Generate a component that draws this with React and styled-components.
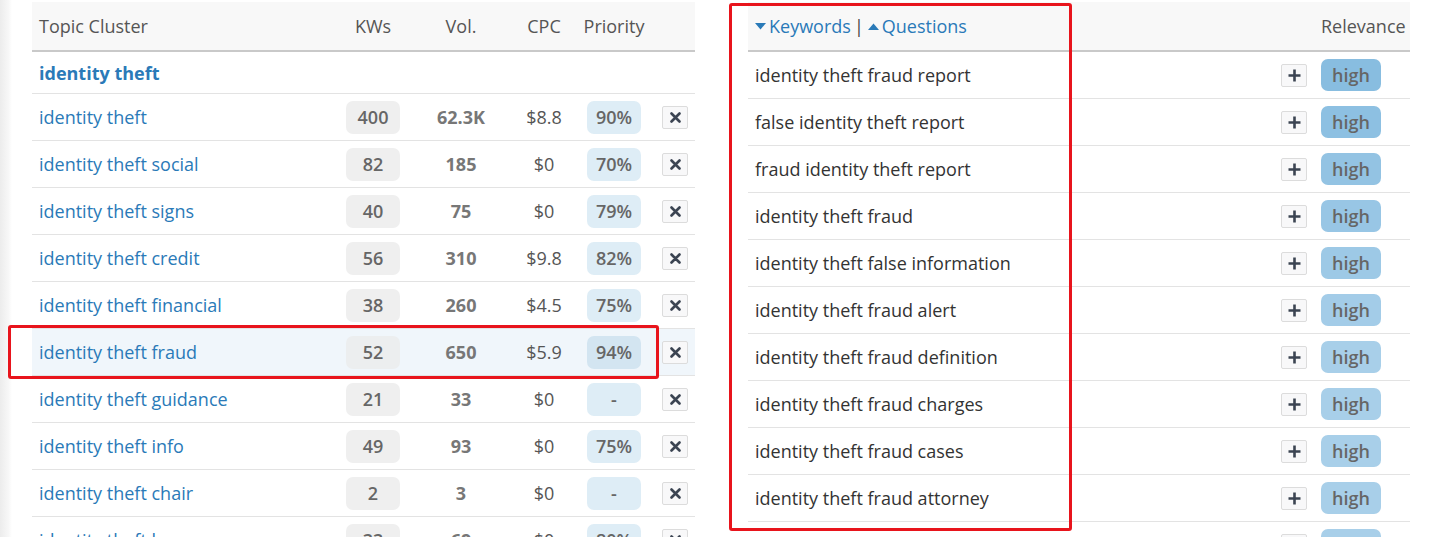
import React from "react";
import styled, { createGlobalStyle } from "styled-components";

const GlobalStyle = createGlobalStyle`
  html, body {
    margin: 0;
    padding: 0;
    background: #fff;
    overflow: hidden;
  }
  body {
    font-family: "Open Sans", "Liberation Sans", sans-serif;
    font-size: 18px;
    color: #333;
  }
`;

const Colors = {
  Link: "#2a7ab8",
  Header: "#555",
  HeaderBg: "#f8f8f8",
  Line: "#e3e3e3",
  HeaderLine: "#c9c9c9",
  Red: "#e8141c",
};

const Page = styled.div`
  position: relative;
  display: flex;
  height: 537px;
  overflow: hidden;
`;

// the faint grey strip down the left edge of the page
const EdgeStrip = styled.div`
  width: 12px;
  flex: none;
  background: linear-gradient(to right, #ececec, #f7f7f7 70%, #fff);
`;

const Content = styled.div`
  display: flex;
  align-items: flex-start;
  gap: 53px;
  padding: 2px 0 0 20px;
`;

const Table = styled.div`
  width: ${props => props.width}px;
  flex: none;
  display: flex;
  flex-direction: column;
`;

const clusterCols = "307px 68px 108px 58px 82px 40px";
const keywordCols = "1fr 40px 96px";

const HeaderRow = styled.div`
  display: grid;
  grid-template-columns: ${props => props.cols};
  align-items: center;
  height: 48px;
  flex: none;
  background: ${Colors.HeaderBg};
  border-bottom: 2px solid ${Colors.HeaderLine};
  color: ${Colors.Header};
`;

const HeadCell = styled.div`
  padding: 0 7px;
  text-align: ${props => props.align || "left"};
  white-space: nowrap;
`;

const Row = styled.div`
  display: grid;
  grid-template-columns: ${props => props.cols};
  align-items: center;
  height: ${props => props.height || 46}px;
  flex: none;
  border-bottom: 1px solid ${Colors.Line};
  background: ${props => (props.active ? "#f0f6fb" : "transparent")};
`;

const Cell = styled.div`
  padding: 0 7px;
  display: flex;
  justify-content: ${props => props.justify || "flex-start"};
  white-space: nowrap;
`;

const TopicLink = styled.span`
  color: ${Colors.Link};
  font-weight: ${props => (props.bold ? 700 : 400)};
`;

const Pill = styled.span`
  display: inline-flex;
  align-items: center;
  justify-content: center;
  width: ${props => props.width || 54}px;
  height: ${props => props.height || 33}px;
  border-radius: 7px;
  background: ${props => props.bg};
  color: #666;
  font-weight: 600;
`;

const Volume = styled.span`
  color: #777;
  font-weight: 700;
`;

const Cpc = styled.span`
  color: #555;
`;

const IconButton = styled.button`
  width: 27px;
  height: 23px;
  padding: 0;
  display: flex;
  align-items: center;
  justify-content: center;
  background: #f8f8f9;
  border: 1px solid #dcdcdc;
  border-radius: 2px;
`;

const KeywordText = styled.span`
  color: #333;
`;

const SortLinks = styled.div`
  display: flex;
  align-items: center;
  gap: 3px;
  color: ${Colors.Link};
`;

const Divider = styled.span`
  color: #444;
  margin: 0 1px 0 0;
`;

const RedBox = styled.div`
  position: absolute;
  border: 3px solid ${Colors.Red};
  border-radius: 3px;
  pointer-events: none;
`;

const CloseIcon = () => (
  <svg width="11" height="11" viewBox="0 0 11 11">
    <path d="M1.5 1.5 L9.5 9.5 M9.5 1.5 L1.5 9.5" stroke="#3b4452" strokeWidth="2.6" strokeLinecap="round" />
  </svg>
);

const PlusIcon = () => (
  <svg width="13" height="13" viewBox="0 0 13 13">
    <path d="M6.5 0.5 V12.5 M0.5 6.5 H12.5" stroke="#3b4452" strokeWidth="2.6" />
  </svg>
);

const Caret = ({ up }) => (
  <svg width="11" height="7" viewBox="0 0 11 7">
    <path d={up ? "M0 7 L5.5 0.5 L11 7 Z" : "M0 0 L11 0 L5.5 6.5 Z"} fill={Colors.Link} />
  </svg>
);

const clusters = [
  { name: "identity theft", kws: 400, vol: "62.3K", cpc: "$8.8", pr: "90%" },
  { name: "identity theft social", kws: 82, vol: "185", cpc: "$0", pr: "70%" },
  { name: "identity theft signs", kws: 40, vol: "75", cpc: "$0", pr: "79%" },
  { name: "identity theft credit", kws: 56, vol: "310", cpc: "$9.8", pr: "82%" },
  { name: "identity theft financial", kws: 38, vol: "260", cpc: "$4.5", pr: "75%" },
  { name: "identity theft fraud", kws: 52, vol: "650", cpc: "$5.9", pr: "94%", active: true },
  { name: "identity theft guidance", kws: 21, vol: "33", cpc: "$0", pr: "-" },
  { name: "identity theft info", kws: 49, vol: "93", cpc: "$0", pr: "75%" },
  { name: "identity theft chair", kws: 2, vol: "3", cpc: "$0", pr: "-" },
  { name: "identity theft law", kws: 33, vol: "69", cpc: "$0", pr: "80%" },
];

const keywords = [
  "identity theft fraud report",
  "false identity theft report",
  "fraud identity theft report",
  "identity theft fraud",
  "identity theft false information",
  "identity theft fraud alert",
  "identity theft fraud definition",
  "identity theft fraud charges",
  "identity theft fraud cases",
  "identity theft fraud attorney",
  "identity theft fraud victims",
];

// relevance pills fade from a stronger to a lighter blue down the list
const relevanceColor = i => {
  const t = Math.min(i / 6, 1);
  const from = [136, 189, 224];
  const to = [168, 207, 233];
  const c = from.map((v, k) => Math.round(v + (to[k] - v) * t));
  return `rgb(${c.join(",")})`;
};

const ClusterTable = () => (
  <Table width={663}>
    <HeaderRow cols={clusterCols}>
      <HeadCell>Topic Cluster</HeadCell>
      <HeadCell align="center">KWs</HeadCell>
      <HeadCell align="center">Vol.</HeadCell>
      <HeadCell align="center">CPC</HeadCell>
      <HeadCell align="center">Priority</HeadCell>
      <HeadCell />
    </HeaderRow>
    <Row cols={clusterCols} height={41}>
      <Cell>
        <TopicLink bold>identity theft</TopicLink>
      </Cell>
    </Row>
    {clusters.map(c => (
      <Row key={c.name} cols={clusterCols} active={c.active}>
        <Cell>
          <TopicLink>{c.name}</TopicLink>
        </Cell>
        <Cell justify="center">
          <Pill bg={c.active ? "#eceeef" : "#efefef"}>{c.kws}</Pill>
        </Cell>
        <Cell justify="center">
          <Volume>{c.vol}</Volume>
        </Cell>
        <Cell justify="center">
          <Cpc>{c.cpc}</Cpc>
        </Cell>
        <Cell justify="center">
          <Pill bg={c.active ? "#d3e5f1" : "#deedf6"}>{c.pr}</Pill>
        </Cell>
        <Cell justify="center">
          <IconButton>
            <CloseIcon />
          </IconButton>
        </Cell>
      </Row>
    ))}
  </Table>
);

const KeywordTable = () => (
  <Table width={662}>
    <HeaderRow cols={keywordCols}>
      <HeadCell>
        <SortLinks>
          <Caret />
          <span>Keywords</span>
          <Divider>|</Divider>
          <Caret up />
          <span>Questions</span>
        </SortLinks>
      </HeadCell>
      <HeadCell />
      <HeadCell>Relevance</HeadCell>
    </HeaderRow>
    {keywords.map((k, i) => (
      <Row key={k} cols={keywordCols}>
        <Cell>
          <KeywordText>{k}</KeywordText>
        </Cell>
        <Cell justify="center">
          <IconButton>
            <PlusIcon />
          </IconButton>
        </Cell>
        <Cell>
          <Pill width={60} height={32} bg={relevanceColor(i)}>
            high
          </Pill>
        </Cell>
      </Row>
    ))}
  </Table>
);

const App = () => (
  <Page>
    <GlobalStyle />
    <EdgeStrip />
    <Content>
      <ClusterTable />
      <KeywordTable />
    </Content>
    <RedBox style={{ left: 8, top: 325, width: 645, height: 48 }} />
    <RedBox style={{ left: 729, top: 3, width: 337, height: 522 }} />
  </Page>
);

export default App;
